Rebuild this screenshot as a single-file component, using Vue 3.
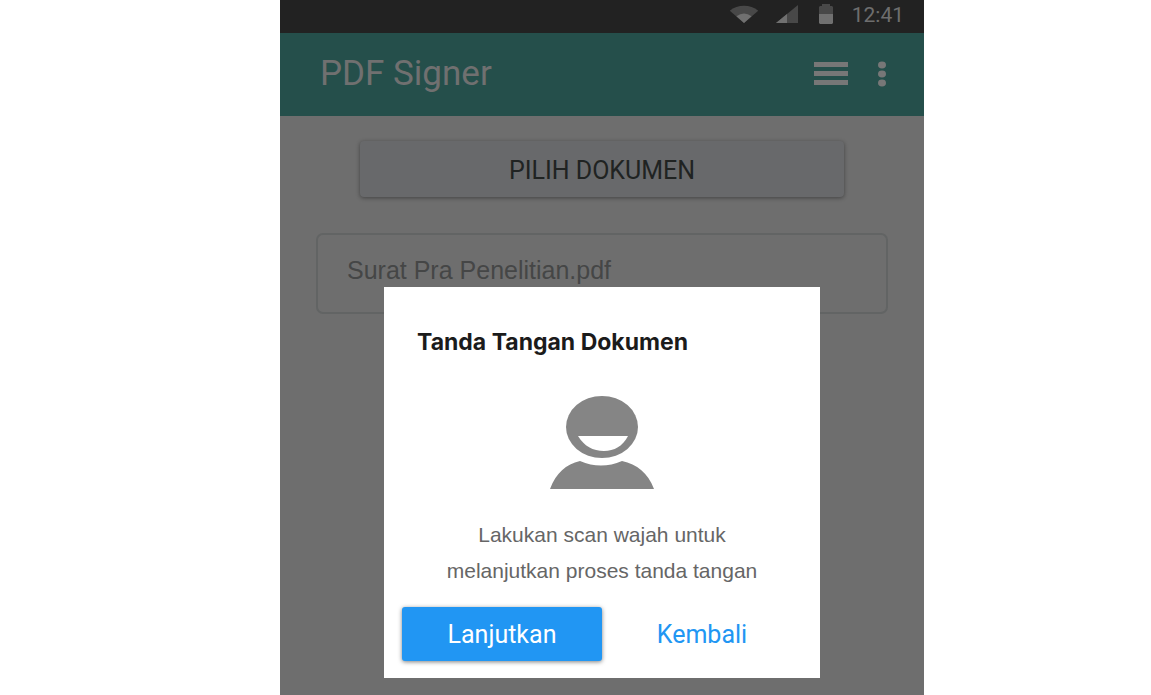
<script setup>
import { ref } from 'vue'

const fileName = ref('Surat Pra Penelitian.pdf')
</script>

<template>
  <div class="page">
    <main class="phone">
      <div class="status">
        <svg class="wifi" viewBox="0 0 30 19" aria-hidden="true">
          <path fill="#484848" d="M0 6C8-1 22-1 30 6L15 19Z" />
          <path fill="#707070" d="M7 12Q15 6 23 12L15 19Z" />
        </svg>
        <svg class="signal" viewBox="0 0 22 18" aria-hidden="true">
          <path fill="#484848" d="M22 0V18H0Z" />
          <path fill="#707070" d="M11 9V18H0Z" />
        </svg>
        <svg class="battery" viewBox="0 0 14 20" aria-hidden="true">
          <path fill="#484848" d="M3 0H11V2H13L14 3V10H0V3L1 2H3Z" />
          <path fill="#707070" d="M0 10H14V19L13 20H1L0 19Z" />
        </svg>
        <time class="clock">12:41</time>
      </div>

      <header class="bar">
        <h1 class="app-title">PDF Signer</h1>
        <button class="icon-btn" type="button" aria-label="Menu">
          <svg class="menu" viewBox="0 0 34 24" aria-hidden="true">
            <path fill="#777" d="M0 0H34V5H0ZM0 9H34V14H0ZM0 18H34V23H0Z" />
          </svg>
        </button>
        <button class="icon-btn" type="button" aria-label="Opsi">
          <svg class="dots" viewBox="0 0 8 26" aria-hidden="true">
            <g fill="#777">
              <ellipse cx="4" cy="4" rx="4" ry="3.4" />
              <ellipse cx="4" cy="13" rx="4" ry="3.4" />
              <ellipse cx="4" cy="22" rx="4" ry="3.4" />
            </g>
          </svg>
        </button>
      </header>

      <section class="content">
        <button class="pick" type="button">PILIH DOKUMEN</button>
        <input v-model="fileName" class="file" type="text" aria-label="Dokumen" readonly />
      </section>

      <section class="dialog" role="dialog" aria-labelledby="dialog-title">
        <h2 id="dialog-title" class="dialog-title">Tanda Tangan Dokumen</h2>
        <svg class="person" viewBox="0 0 104 94" aria-hidden="true">
          <ellipse cx="52" cy="31" rx="36" ry="31" fill="#858585" />
          <path fill="#fff" d="M28 40H78C73 50 64 55 54 55C43 55 34 50 28 40Z" />
          <path fill="#858585" d="M0 93C6 77 16 68 30 65Q51 74 72 65C87 68 98 77 104 93Z" />
        </svg>
        <p class="message">Lakukan scan wajah untuk<br />melanjutkan proses tanda tangan</p>
        <div class="actions">
          <button class="action primary" type="button">Lanjutkan</button>
          <button class="action" type="button">Kembali</button>
        </div>
      </section>
    </main>
  </div>
</template>

<style>
body {
  margin: 0;
  background: #fff;
}
</style>

<style scoped>
* {
  box-sizing: border-box;
}

.page {
  display: grid;
  grid-template-columns: 280fr 644fr 227fr;
  min-height: 100vh;
}

.phone {
  grid-column: 2;
  position: relative;
  display: flex;
  flex-direction: column;
  min-width: 0;
  background: #6e6e6e;
  font-family: Roboto, "Liberation Sans", sans-serif;
}

.status {
  display: flex;
  align-items: center;
  justify-content: flex-end;
  height: 33px;
  padding: 0 20px 6px 0;
  background: #222;
}

.wifi {
  width: 30px;
  height: 18px;
  margin-right: 17px;
}

.signal {
  width: 22px;
  height: 18px;
  margin-right: 21px;
}

.battery {
  width: 14px;
  height: 20px;
  margin-right: 19px;
}

.clock {
  padding-top: 2px;
  color: #6e6e6e;
  font-size: 21px;
  line-height: 24px;
}

.bar {
  display: flex;
  align-items: center;
  height: 83px;
  padding: 0 38px 2px 40px;
  background: #254f4b;
}

.app-title {
  flex: 1;
  margin: 0;
  color: #707070;
  font-size: 35px;
  font-weight: 400;
  line-height: 40px;
}

.icon-btn {
  display: flex;
  padding: 0;
  border: 0;
  background: none;
}

.menu {
  width: 34px;
  height: 24px;
  margin-right: 30px;
}

.dots {
  width: 8px;
  height: 26px;
}

.content {
  display: flex;
  flex-direction: column;
  gap: 36px;
  padding: 25px 36px;
}

.pick {
  height: 56px;
  margin: 0 44px;
  padding: 2px 0 0;
  border: 0;
  border-radius: 4px;
  background: #68696b;
  box-shadow: 0 1px 4px rgba(0, 0, 0, 0.4);
  color: #202322;
  font-family: inherit;
  font-size: 25px;
}

.file {
  width: 100%;
  height: 81px;
  padding: 0 29px 6px;
  border: 2px solid #626464;
  border-radius: 7px;
  outline: 0;
  background: transparent;
  color: #454646;
  font-family: "Liberation Sans", Arial, sans-serif;
  font-size: 25px;
}

.dialog {
  position: absolute;
  top: 287px;
  right: 104px;
  left: 104px;
  display: flex;
  flex-direction: column;
  padding: 39px 18px 17px;
  background: #fff;
}

.dialog-title {
  margin: 0 15px;
  color: #1b1b1b;
  font-family: Inter, "Liberation Sans", sans-serif;
  font-size: 23px;
  font-weight: 700;
  line-height: 32px;
}

.person {
  align-self: center;
  width: 104px;
  height: 94px;
  margin-top: 38px;
}

.message {
  margin: 27px 0 18px;
  color: #666;
  font-family: "Liberation Sans", Arial, sans-serif;
  font-size: 21px;
  line-height: 36px;
  text-align: center;
}

.actions {
  display: grid;
  grid-template-columns: 1fr 1fr;
}

.action {
  height: 54px;
  padding: 0;
  border: 0;
  border-radius: 3px;
  background: none;
  color: #2196f3;
  font-family: inherit;
  font-size: 25px;
}

.primary {
  background: #2196f3;
  box-shadow: 0 1px 4px rgba(0, 0, 0, 0.5);
  color: #fff;
}
</style>
